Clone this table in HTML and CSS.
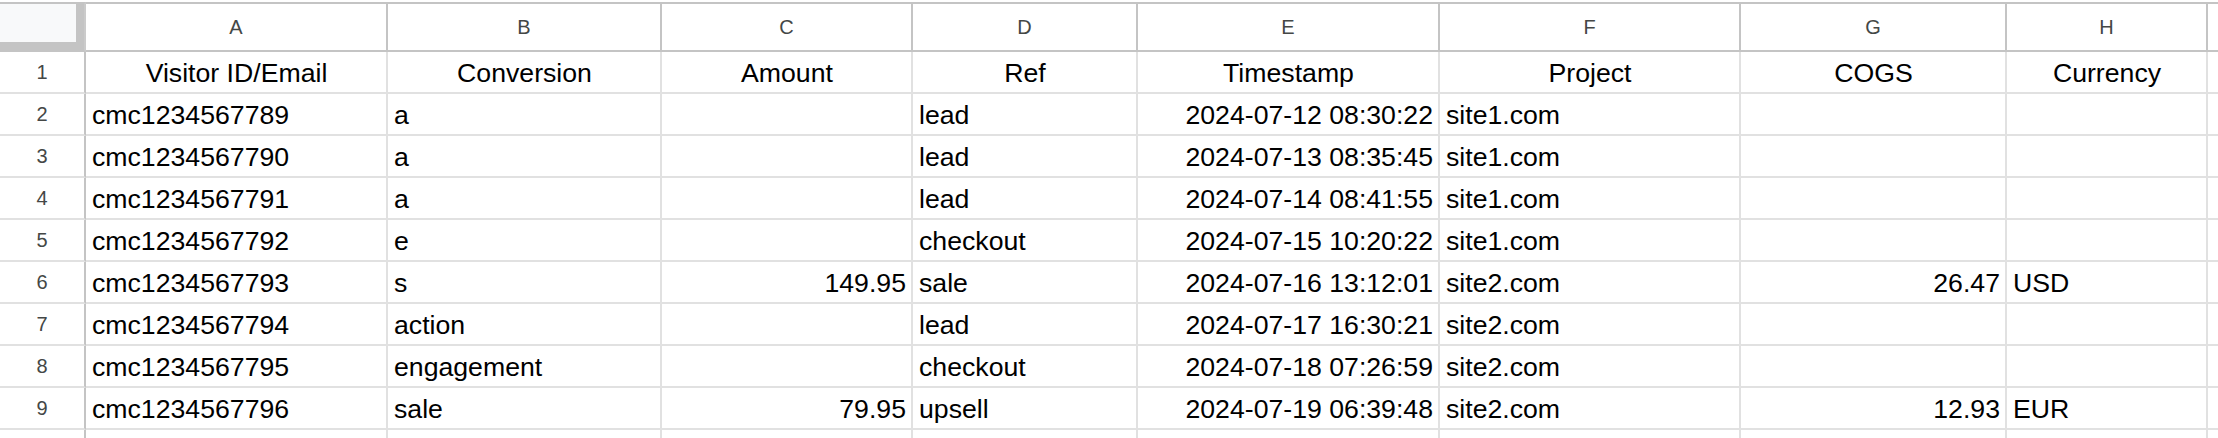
FILE: index.html
```html
<!DOCTYPE html>
<html>
<head>
<meta charset="utf-8">
<link rel="stylesheet" href="styles.css">
</head>
<body>
<div class="sheet">
  <div class="grid">
    <div class="corner"><div class="corner-box"></div></div>
    <div class="colhdr">A</div>
    <div class="colhdr">B</div>
    <div class="colhdr">C</div>
    <div class="colhdr">D</div>
    <div class="colhdr">E</div>
    <div class="colhdr">F</div>
    <div class="colhdr">G</div>
    <div class="colhdr">H</div>
    <div class="colhdr last"></div>

    <div class="rowhdr">1</div>
    <div class="cell c">Visitor ID/Email</div>
    <div class="cell c">Conversion</div>
    <div class="cell c">Amount</div>
    <div class="cell c">Ref</div>
    <div class="cell c">Timestamp</div>
    <div class="cell c">Project</div>
    <div class="cell c">COGS</div>
    <div class="cell c">Currency</div>
    <div class="cell"></div>

    <div class="rowhdr">2</div>
    <div class="cell">cmc1234567789</div>
    <div class="cell">a</div>
    <div class="cell r"></div>
    <div class="cell">lead</div>
    <div class="cell r">2024-07-12 08:30:22</div>
    <div class="cell">site1.com</div>
    <div class="cell r"></div>
    <div class="cell"></div>
    <div class="cell"></div>

    <div class="rowhdr">3</div>
    <div class="cell">cmc1234567790</div>
    <div class="cell">a</div>
    <div class="cell r"></div>
    <div class="cell">lead</div>
    <div class="cell r">2024-07-13 08:35:45</div>
    <div class="cell">site1.com</div>
    <div class="cell r"></div>
    <div class="cell"></div>
    <div class="cell"></div>

    <div class="rowhdr">4</div>
    <div class="cell">cmc1234567791</div>
    <div class="cell">a</div>
    <div class="cell r"></div>
    <div class="cell">lead</div>
    <div class="cell r">2024-07-14 08:41:55</div>
    <div class="cell">site1.com</div>
    <div class="cell r"></div>
    <div class="cell"></div>
    <div class="cell"></div>

    <div class="rowhdr">5</div>
    <div class="cell">cmc1234567792</div>
    <div class="cell">e</div>
    <div class="cell r"></div>
    <div class="cell">checkout</div>
    <div class="cell r">2024-07-15 10:20:22</div>
    <div class="cell">site1.com</div>
    <div class="cell r"></div>
    <div class="cell"></div>
    <div class="cell"></div>

    <div class="rowhdr">6</div>
    <div class="cell">cmc1234567793</div>
    <div class="cell">s</div>
    <div class="cell r">149.95</div>
    <div class="cell">sale</div>
    <div class="cell r">2024-07-16 13:12:01</div>
    <div class="cell">site2.com</div>
    <div class="cell r">26.47</div>
    <div class="cell">USD</div>
    <div class="cell"></div>

    <div class="rowhdr">7</div>
    <div class="cell">cmc1234567794</div>
    <div class="cell">action</div>
    <div class="cell r"></div>
    <div class="cell">lead</div>
    <div class="cell r">2024-07-17 16:30:21</div>
    <div class="cell">site2.com</div>
    <div class="cell r"></div>
    <div class="cell"></div>
    <div class="cell"></div>

    <div class="rowhdr">8</div>
    <div class="cell">cmc1234567795</div>
    <div class="cell">engagement</div>
    <div class="cell r"></div>
    <div class="cell">checkout</div>
    <div class="cell r">2024-07-18 07:26:59</div>
    <div class="cell">site2.com</div>
    <div class="cell r"></div>
    <div class="cell"></div>
    <div class="cell"></div>

    <div class="rowhdr">9</div>
    <div class="cell">cmc1234567796</div>
    <div class="cell">sale</div>
    <div class="cell r">79.95</div>
    <div class="cell">upsell</div>
    <div class="cell r">2024-07-19 06:39:48</div>
    <div class="cell">site2.com</div>
    <div class="cell r">12.93</div>
    <div class="cell">EUR</div>
    <div class="cell"></div>

    <div class="rowhdr"></div>
    <div class="cell"></div>
    <div class="cell"></div>
    <div class="cell"></div>
    <div class="cell"></div>
    <div class="cell"></div>
    <div class="cell"></div>
    <div class="cell"></div>
    <div class="cell"></div>
    <div class="cell"></div>
  </div>
</div>
</body>
</html>
```

FILE: styles.css
```css
html, body {
  margin: 0;
  padding: 0;
  background: #ffffff;
  overflow: hidden;
}

.sheet {
  padding-top: 2px;
  width: 2218px;
  height: 436px;
  overflow: hidden;
  font-family: "Liberation Sans", Arial, sans-serif;
}

.grid {
  display: grid;
  grid-template-columns: 86px 302px 274px 251px 225px 302px 301px 266px 201px 1fr;
  grid-template-rows: 50px repeat(10, 42px);
}

.corner {
  box-sizing: border-box;
  border-top: 2px solid #c4c4c4;
  border-right: 2px solid #cbcbcb;
  border-bottom: 2px solid #c4c4c4;
  background: #c4c4c4;
  display: flex;
  align-items: flex-start;
  justify-content: flex-start;
}

.corner-box {
  width: 76px;
  height: 38px;
  background: #f8f9fa;
}

.colhdr {
  box-sizing: border-box;
  border-top: 2px solid #c4c4c4;
  border-right: 2px solid #c4c4c4;
  border-bottom: 2px solid #c4c4c4;
  display: flex;
  align-items: center;
  justify-content: center;
  font-size: 20px;
  color: #444746;
  padding-top: 1px;
}

.colhdr.last {
  border-right: none;
}

.rowhdr {
  box-sizing: border-box;
  border-right: 2px solid #c4c4c4;
  border-bottom: 2px solid #e1e1e1;
  display: flex;
  align-items: center;
  justify-content: center;
  font-size: 20px;
  color: #444746;
}

.cell {
  box-sizing: border-box;
  border-right: 2px solid #e1e1e1;
  border-bottom: 2px solid #e1e1e1;
  display: flex;
  align-items: flex-end;
  justify-content: flex-start;
  padding: 0 5px 3px 6px;
  font-size: 26.67px;
  line-height: 31px;
  color: #000000;
  white-space: nowrap;
  overflow: hidden;
}

.cell.c {
  justify-content: center;
}

.cell.r {
  justify-content: flex-end;
}
```
